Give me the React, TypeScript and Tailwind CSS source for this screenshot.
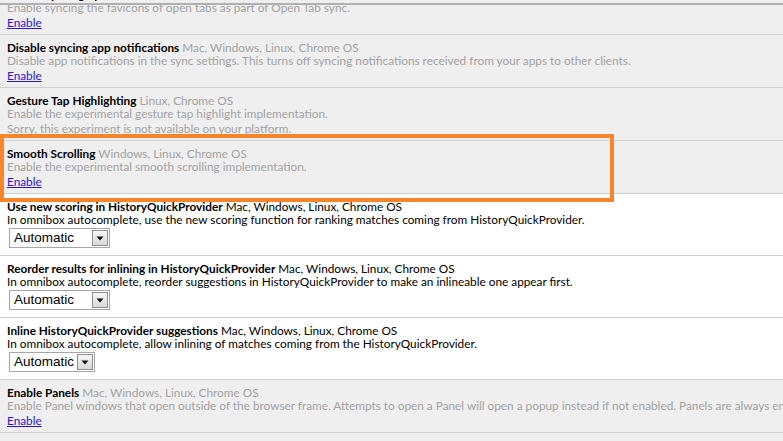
import React from "react";

type RowProps = {
  gray?: boolean;
  title: string;
  platforms: string;
  desc: string;
  sorry?: string;
  enable?: boolean;
  selectWidth?: number;
};

function Select({ wide }: { wide: boolean }) {
  return (
    <div
      className={`mt-[2px] ml-[9px] h-[20px] ${wide ? "w-[101px]" : "w-[86px]"} border border-[#a7a7a7] bg-white flex items-center`}
    >
      <span className="pl-[4px] text-[13.5px] leading-none text-black" style={{ fontFamily: '"Liberation Sans", Arial, sans-serif' }}>
        Automatic
      </span>
      <div className="ml-auto mr-[1px] w-[16px] h-[16px] border border-[#8e8e8e] bg-gradient-to-b from-[#f6f6f6] to-[#d9d9d9] flex items-center justify-center">
        <svg width="8" height="5" viewBox="0 0 8 5">
          <path d="M0.5 0.5 L7.5 0.5 L4 4.5 Z" fill="#111" />
        </svg>
      </div>
    </div>
  );
}

function Row({ gray, title, platforms, desc, sorry, enable, selectWidth }: RowProps) {
  const dim = gray;
  return (
    <div
      className={`${gray ? "bg-[#efefef]" : "bg-white"} border-b border-[#cfcfcf] pt-[6px] ${selectWidth ? "pb-[7px]" : "pb-[5px]"} whitespace-nowrap`}
    >
      <div className="pl-[7px] h-[13px] leading-[13px]">
        <span className="font-bold text-black">{title}</span>{" "}
        <span className={dim ? "text-[#a3a3a3]" : "text-black"}>{platforms}</span>
      </div>
      <div className={`pl-[7px] h-[13px] leading-[13px] ${dim ? "text-[#a3a3a3]" : "text-black"}`}>{desc}</div>
      {sorry && <div className="pl-[7px] h-[15px] leading-[17px] text-[#a3a3a3]">{sorry}</div>}
      {enable && (
        <div className="pl-[7px] h-[15px] leading-[17px]">
          <a className="text-[#2a16d4] underline underline-offset-[1px]" href="#">
            Enable
          </a>
        </div>
      )}
      {selectWidth && <Select wide={selectWidth > 90} />}
    </div>
  );
}

export default function App() {
  return (
    <div
      className="relative w-[783px] h-[441px] overflow-hidden bg-[#efefef] text-[11.8px]"
      style={{ fontFamily: 'Lato, "Noto Sans", sans-serif' }}
    >
      <div className="-mt-[18px]">
        <Row
          gray
          title="Enable syncing open tab favicons"
          platforms="Mac, Windows, Linux, Chrome OS"
          desc="Enable syncing the favicons of open tabs as part of Open Tab sync."
          enable
        />
        <Row
          gray
          title="Disable syncing app notifications"
          platforms="Mac, Windows, Linux, Chrome OS"
          desc="Disable app notifications in the sync settings. This turns off syncing notifications received from your apps to other clients."
          enable
        />
        <Row
          gray
          title="Gesture Tap Highlighting"
          platforms="Linux, Chrome OS"
          desc="Enable the experimental gesture tap highlight implementation."
          sorry="Sorry, this experiment is not available on your platform."
        />
        <Row
          gray
          title="Smooth Scrolling"
          platforms="Windows, Linux, Chrome OS"
          desc="Enable the experimental smooth scrolling implementation."
          enable
        />
        <Row
          title="Use new scoring in HistoryQuickProvider"
          platforms="Mac, Windows, Linux, Chrome OS"
          desc="In omnibox autocomplete, use the new scoring function for ranking matches coming from HistoryQuickProvider."
          selectWidth={101}
        />
        <Row
          title="Reorder results for inlining in HistoryQuickProvider"
          platforms="Mac, Windows, Linux, Chrome OS"
          desc="In omnibox autocomplete, reorder suggestions in HistoryQuickProvider to make an inlineable one appear first."
          selectWidth={101}
        />
        <Row
          title="Inline HistoryQuickProvider suggestions"
          platforms="Mac, Windows, Linux, Chrome OS"
          desc="In omnibox autocomplete, allow inlining of matches coming from the HistoryQuickProvider."
          selectWidth={86}
        />
        <Row
          gray
          title="Enable Panels"
          platforms="Mac, Windows, Linux, Chrome OS"
          desc="Enable Panel windows that open outside of the browser frame. Attempts to open a Panel will open a popup instead if not enabled. Panels are always enabled on the dev and canary channels."
          enable
        />
      </div>
      <div className="absolute left-0 right-0 top-[3px] h-[2px] bg-[#b0b0b0]" />
      <div className="absolute left-0 top-[134px] w-[614px] h-[68px] border-[4px] border-[#f6852b]" />
    </div>
  );
}
